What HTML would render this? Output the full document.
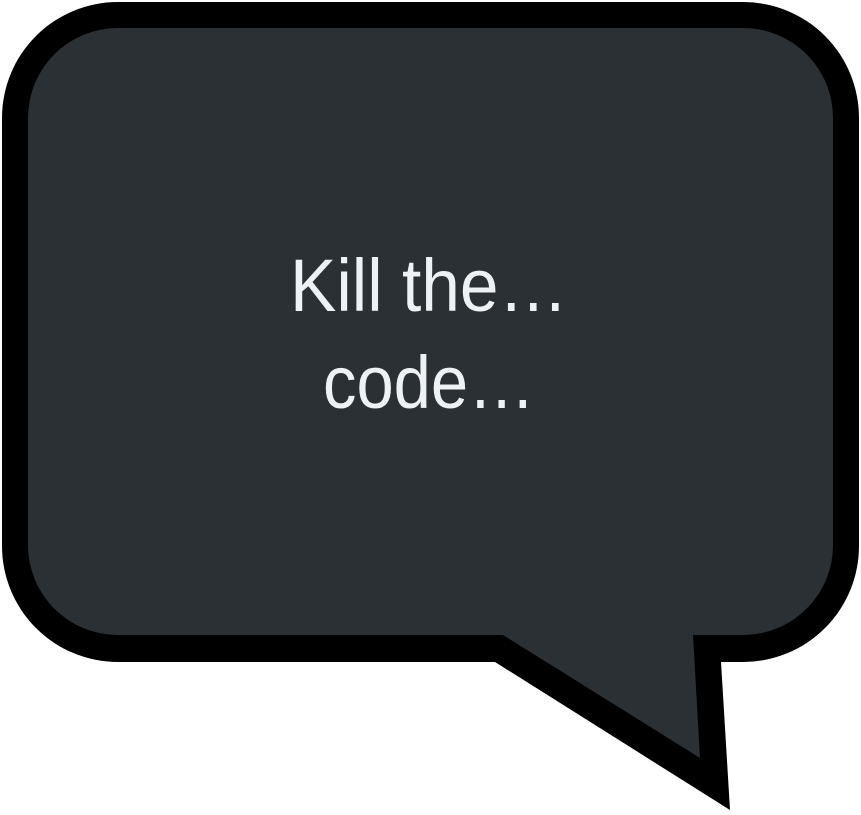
<!DOCTYPE html>
<html><head><meta charset="utf-8"><style>
html,body{margin:0;padding:0;background:#fff;width:861px;height:815px;overflow:hidden}
svg{display:block}
</style></head><body>
<svg width="861" height="815" viewBox="0 0 861 815" xmlns="http://www.w3.org/2000/svg">
  <rect x="2" y="2" width="857" height="660" rx="116" ry="116" fill="#000"/>
  <polygon points="480,640 495,662 730,810 721,662 721,640" fill="#000"/>
  <rect x="28" y="28" width="805" height="607" rx="90" ry="90" fill="#2b3034"/>
  <polygon points="490,620 503,635 700,758 693,635 693,620" fill="#2b3034"/>
  <text x="290" y="311" font-family="Liberation Sans, sans-serif" font-size="74" fill="#eef2f4" textLength="278" lengthAdjust="spacingAndGlyphs">Kill the…</text>
  <text x="323" y="408" font-family="Liberation Sans, sans-serif" font-size="74" fill="#eef2f4" textLength="212" lengthAdjust="spacingAndGlyphs">code…</text>
</svg>
</body></html>
